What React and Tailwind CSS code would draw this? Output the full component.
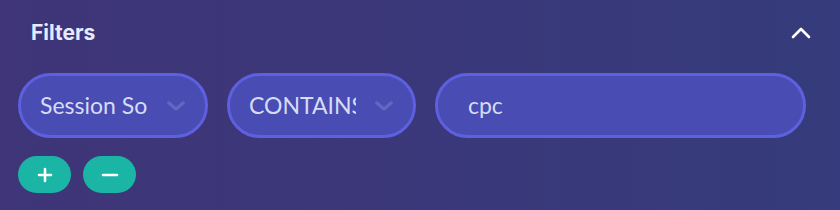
const ChevronDown = () => (
    <svg width="18" height="10" viewBox="0 0 18 10" className="shrink-0">
        <path d="M2 2l7 6 7-6" fill="none" stroke="#6466c2" strokeWidth="3.5" strokeLinecap="round" strokeLinejoin="round" />
    </svg>
);

const Select = ({ value, width }) => (
    <div
        className={`${width} h-[65px] shrink-0 rounded-full border-[3px] border-[#5d60df] bg-[#494cb3] flex items-center pl-[19px] pr-[20px]`}
    >
        <div className="flex-1 overflow-hidden whitespace-nowrap text-[23px] leading-none text-[#d6dcf6] mr-[19px]">
            {value}
        </div>
        <ChevronDown />
    </div>
);

const App = () => {
    return (
        <div
            className="w-[840px] h-[210px] bg-gradient-to-r from-[#3f3578] to-[#353b7c] overflow-hidden"
            style={{ fontFamily: 'Lato, "Noto Sans", sans-serif' }}
        >
            <div className="flex items-center justify-between pl-[31px] pr-[29px] pt-[20px] h-[46px]">
                <h2 className="text-[21px] font-bold text-[#e5ebff]" style={{ fontFamily: 'Inter, sans-serif' }}>
                    Filters
                </h2>
                <svg width="20" height="12" viewBox="0 0 20 12">
                    <path d="M2 10l8-8 8 8" fill="none" stroke="#ffffff" strokeWidth="2.6" strokeLinecap="round" strokeLinejoin="round" />
                </svg>
            </div>

            <div className="flex items-center gap-[19px] pl-[18px] pr-[34px] mt-[27px]">
                <Select value="Session Source" width="w-[190px]" />
                <Select value="CONTAINS" width="w-[189px]" />
                <div className="flex-1 h-[65px] rounded-full border-[3px] border-[#5d60df] bg-[#494cb3] flex items-center pl-[30px]">
                    <span className="text-[23px] leading-none text-[#d6dcf6]">cpc</span>
                </div>
            </div>

            <div className="flex gap-[12px] pl-[18px] mt-[18px]">
                <button className="w-[53px] h-[37px] rounded-full bg-[#1bb5a5] flex items-center justify-center">
                    <svg width="16" height="16" viewBox="0 0 16 16">
                        <path d="M8 2v12M2 8h12" stroke="#ffffff" strokeWidth="2.6" strokeLinecap="round" />
                    </svg>
                </button>
                <button className="w-[53px] h-[37px] rounded-full bg-[#1bb5a5] flex items-center justify-center">
                    <svg width="18" height="16" viewBox="0 0 18 16">
                        <path d="M2 8h14" stroke="#ffffff" strokeWidth="2.6" strokeLinecap="round" />
                    </svg>
                </button>
            </div>
        </div>
    );
};

export default App;
